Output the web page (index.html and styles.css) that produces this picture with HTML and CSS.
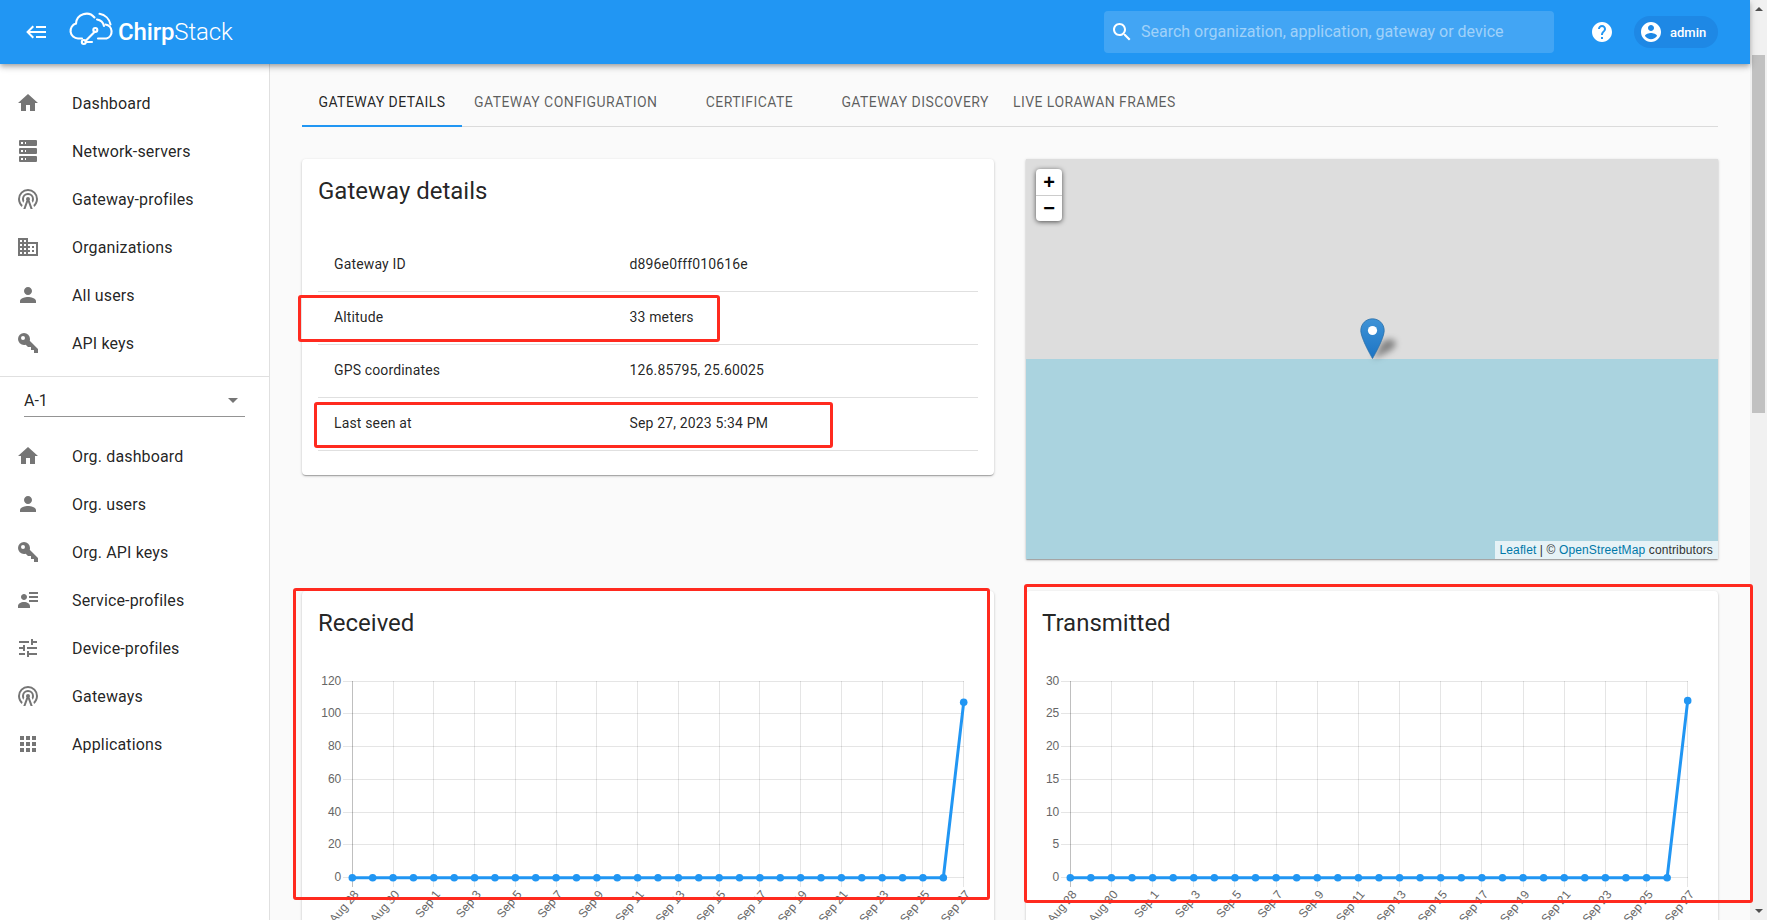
FILE: index.html
```html
<!DOCTYPE html>
<html lang="en">
<head>
<meta charset="utf-8">
<title>ChirpStack - Gateway details</title>
<link rel="stylesheet" href="styles.css">
</head>
<body>
<div class="app">
  <div class="page">
    <header class="topbar">
      <svg class="ic ic-menu" viewBox="0 0 24 24"><path d="M5,13L9,17L7.6,18.42L1.18,12L7.6,5.58L9,7L5,11H21V13H5M21,6V8H11V6H21M21,16V18H11V16H21Z"/></svg>
      <div class="logo">
        <svg class="logo-mark" viewBox="0 0 60 50">
          <path class="logo-line" d="M21 33.5H17A7.6 7.6 0 0 1 15 18.6A10.5 10.5 0 0 1 33.5 12.5"/>
          <path class="logo-line" d="M44.5 19.5A7.2 7.2 0 0 1 45.5 33.5H37"/>
          <path class="logo-line" d="M38.5 8.8A13.5 13.5 0 0 1 49.5 19.5"/>
          <path class="logo-line" d="M36 14.5A8.5 8.5 0 0 1 43 21"/>
          <path class="logo-line" d="M34 26.5L24.5 36"/>
          <circle class="logo-line" cx="34.3" cy="25" r="2"/>
          <circle class="logo-line" cx="22.8" cy="37" r="2"/>
          <path class="logo-line" d="M24.8 37H31"/>
        </svg>
        <span class="logo-text"><b>Chirp</b>Stack</span>
      </div>
      <div class="search">
        <svg class="ic" viewBox="0 0 24 24"><path d="M15.5 14h-.79l-.28-.27C15.41 12.59 16 11.11 16 9.5 16 5.91 13.09 3 9.5 3S3 5.91 3 9.5 5.91 16 9.5 16c1.61 0 3.09-.59 4.23-1.57l.27.28v.79l5 4.99L20.49 19l-4.99-5zm-6 0C7.01 14 5 11.99 5 9.5S7.01 5 9.5 5 14 7.01 14 9.5 11.99 14 9.5 14z"/></svg>
        <span class="search-text">Search organization, application, gateway or device</span>
      </div>
      <svg class="ic ic-help" viewBox="0 0 24 24"><path d="M12 2C6.48 2 2 6.48 2 12s4.48 10 10 10 10-4.48 10-10S17.52 2 12 2zm1 17h-2v-2h2v2zm2.07-7.75l-.9.92C13.45 12.9 13 13.5 13 15h-2v-.5c0-1.1.45-2.1 1.17-2.83l1.24-1.26c.37-.36.59-.86.59-1.41 0-1.1-.9-2-2-2s-2 .9-2 2H8c0-2.21 1.79-4 4-4s4 1.79 4 4c0 .88-.36 1.68-.93 2.25z"/></svg>
      <div class="chip">
        <svg class="ic" viewBox="0 0 24 24"><path d="M12 2C6.48 2 2 6.48 2 12s4.48 10 10 10 10-4.48 10-10S17.52 2 12 2zm0 3c1.66 0 3 1.34 3 3s-1.34 3-3 3-3-1.34-3-3 1.34-3 3-3zm0 14.2c-2.5 0-4.71-1.28-6-3.22.03-1.99 4-3.08 6-3.08 1.99 0 5.97 1.09 6 3.08-1.29 1.94-3.5 3.22-6 3.22z"/></svg>
        <span>admin</span>
      </div>
    </header>

    <div class="body">
      <nav class="sidebar">
        <ul class="nav nav-first">
          <li><svg class="ic" viewBox="0 0 24 24"><path d="M10 20v-6h4v6h5v-8h3L12 3 2 12h3v8z"/></svg>Dashboard</li>
          <li><svg class="ic" viewBox="0 0 24 24"><path d="M4,1H20A1,1 0 0,1 21,2V6A1,1 0 0,1 20,7H4A1,1 0 0,1 3,6V2A1,1 0 0,1 4,1M4,9H20A1,1 0 0,1 21,10V14A1,1 0 0,1 20,15H4A1,1 0 0,1 3,14V10A1,1 0 0,1 4,9M4,17H20A1,1 0 0,1 21,18V22A1,1 0 0,1 20,23H4A1,1 0 0,1 3,22V18A1,1 0 0,1 4,17M9,5H10V3H9V5M9,13H10V11H9V13M9,21H10V19H9V21M5,3V5H7V3H5M5,11V13H7V11H5M5,19V21H7V19H5Z"/></svg>Network-servers</li>
          <li><svg class="ic" viewBox="0 0 24 24"><path d="M12,10A2,2 0 0,1 14,12C14,12.5 13.82,12.94 13.53,13.29L16.7,22H14.57L12,14.93L9.43,22H7.3L10.47,13.29C10.18,12.94 10,12.5 10,12A2,2 0 0,1 12,10M12,8A4,4 0 0,0 8,12C8,12.5 8.1,13 8.28,13.46L7.4,15.86C6.53,14.81 6,13.47 6,12A6,6 0 0,1 12,6A6,6 0 0,1 18,12C18,13.47 17.47,14.81 16.6,15.86L15.72,13.46C15.9,13 16,12.5 16,12A4,4 0 0,0 12,8M12,4A8,8 0 0,0 4,12C4,14.36 5,16.5 6.64,17.94L5.92,19.94C3.54,18.11 2,15.23 2,12A10,10 0 0,1 12,2A10,10 0 0,1 22,12C22,15.23 20.46,18.11 18.08,19.94L17.36,17.94C19,16.5 20,14.36 20,12A8,8 0 0,0 12,4Z"/></svg>Gateway-profiles</li>
          <li><svg class="ic" viewBox="0 0 24 24"><path d="M12 7V3H2v18h20V7H12zM6 19H4v-2h2v2zm0-4H4v-2h2v2zm0-4H4V9h2v2zm0-4H4V5h2v2zm4 12H8v-2h2v2zm0-4H8v-2h2v2zm0-4H8V9h2v2zm0-4H8V5h2v2zm10 12h-8v-2h2v-2h-2v-2h2v-2h-2V9h8v10zm-2-8h-2v2h2v-2zm0 4h-2v2h2v-2z"/></svg>Organizations</li>
          <li><svg class="ic" viewBox="0 0 24 24"><path d="M12 12c2.21 0 4-1.79 4-4s-1.79-4-4-4-4 1.79-4 4 1.79 4 4 4zm0 2c-2.67 0-8 1.34-8 4v2h16v-2c0-2.66-5.33-4-8-4z"/></svg>All users</li>
          <li><svg class="ic" viewBox="0 0 24 24"><path d="M22,18V22H18V19H15V16H12L9.74,13.74C9.19,13.91 8.61,14 8,14A6,6 0 0,1 2,8A6,6 0 0,1 8,2A6,6 0 0,1 14,8C14,8.61 13.91,9.19 13.74,9.74L22,18M7,5A2,2 0 0,0 5,7A2,2 0 0,0 7,9A2,2 0 0,0 9,7A2,2 0 0,0 7,5Z"/></svg>API keys</li>
        </ul>
        <div class="org-select">
          <span>A-1</span>
          <svg class="ic" viewBox="0 0 24 24"><path d="M7 10l5 5 5-5z"/></svg>
        </div>
        <ul class="nav">
          <li><svg class="ic" viewBox="0 0 24 24"><path d="M10 20v-6h4v6h5v-8h3L12 3 2 12h3v8z"/></svg>Org. dashboard</li>
          <li><svg class="ic" viewBox="0 0 24 24"><path d="M12 12c2.21 0 4-1.79 4-4s-1.79-4-4-4-4 1.79-4 4 1.79 4 4 4zm0 2c-2.67 0-8 1.34-8 4v2h16v-2c0-2.66-5.33-4-8-4z"/></svg>Org. users</li>
          <li><svg class="ic" viewBox="0 0 24 24"><path d="M22,18V22H18V19H15V16H12L9.74,13.74C9.19,13.91 8.61,14 8,14A6,6 0 0,1 2,8A6,6 0 0,1 8,2A6,6 0 0,1 14,8C14,8.61 13.91,9.19 13.74,9.74L22,18M7,5A2,2 0 0,0 5,7A2,2 0 0,0 7,9A2,2 0 0,0 9,7A2,2 0 0,0 7,5Z"/></svg>Org. API keys</li>
          <li><svg class="ic" viewBox="0 0 24 24"><path d="M11,9C11,10.66 9.66,12 8,12C6.34,12 5,10.66 5,9C5,7.34 6.34,6 8,6C9.66,6 11,7.34 11,9M14,20H2V18C2,15.79 4.69,14 8,14C11.31,14 14,15.79 14,18M22,12V14H13V12M22,8V10H13V8M22,4V6H13V4Z"/></svg>Service-profiles</li>
          <li><svg class="ic" viewBox="0 0 24 24"><path d="M3 17v2h6v-2H3zM3 5v2h10V5H3zm10 16v-2h8v-2h-8v-2h-2v6h2zM7 9v2H3v2h4v2h2V9H7zm14 4v-2H11v2h10zm-6-4h2V7h4V5h-4V3h-2v6z"/></svg>Device-profiles</li>
          <li><svg class="ic" viewBox="0 0 24 24"><path d="M12,10A2,2 0 0,1 14,12C14,12.5 13.82,12.94 13.53,13.29L16.7,22H14.57L12,14.93L9.43,22H7.3L10.47,13.29C10.18,12.94 10,12.5 10,12A2,2 0 0,1 12,10M12,8A4,4 0 0,0 8,12C8,12.5 8.1,13 8.28,13.46L7.4,15.86C6.53,14.81 6,13.47 6,12A6,6 0 0,1 12,6A6,6 0 0,1 18,12C18,13.47 17.47,14.81 16.6,15.86L15.72,13.46C15.9,13 16,12.5 16,12A4,4 0 0,0 12,8M12,4A8,8 0 0,0 4,12C4,14.36 5,16.5 6.64,17.94L5.92,19.94C3.54,18.11 2,15.23 2,12A10,10 0 0,1 12,2A10,10 0 0,1 22,12C22,15.23 20.46,18.11 18.08,19.94L17.36,17.94C19,16.5 20,14.36 20,12A8,8 0 0,0 12,4Z"/></svg>Gateways</li>
          <li><svg class="ic" viewBox="0 0 24 24"><path d="M16,20H20V16H16M16,14H20V10H16M10,8H14V4H10M16,8H20V4H16M10,14H14V10H10M4,14H8V10H4M4,20H8V16H4M10,20H14V16H10M4,8H8V4H4V8Z"/></svg>Applications</li>
        </ul>
      </nav>

      <main class="main">
        <div class="tabs">
          <div class="tab tab-active">Gateway details</div>
          <div class="tab">Gateway configuration</div>
          <div class="tab">Certificate</div>
          <div class="tab">Gateway discovery</div>
          <div class="tab">Live LoRaWAN frames</div>
        </div>

        <div class="grid">
          <section class="card">
            <h2 class="card-title">Gateway details</h2>
            <div class="details">
              <div class="row"><span>Gateway ID</span><span>d896e0fff010616e</span></div>
              <div class="row"><span>Altitude</span><span>33 meters</span></div>
              <div class="row"><span>GPS coordinates</span><span>126.85795, 25.60025</span></div>
              <div class="row"><span>Last seen at</span><span>Sep 27, 2023 5:34 PM</span></div>
            </div>
          </section>

          <section class="map">
            <div class="zoom-ctl">
              <div class="zoom-btn">+</div>
              <div class="zoom-btn">−</div>
            </div>
            <svg class="pin" viewBox="0 0 50 45">
              <defs>
                <linearGradient id="pinfill" x1="0" y1="0" x2="0" y2="1">
                  <stop offset="0" stop-color="#3f93d6"/>
                  <stop offset="1" stop-color="#1c74c4"/>
                </linearGradient>
                <filter id="pinblur" x="-30%" y="-30%" width="160%" height="160%"><feGaussianBlur stdDeviation="3"/></filter>
              </defs>
              <path class="pin-shadow" d="M13 41L22 24Q30 18 36 24Q36 30 28 34Z" filter="url(#pinblur)"/>
              <path d="M12.5 .8C5.9 .8 .8 6 .8 12.5 .8 20.5 12.5 40.5 12.5 40.5S24.2 20.5 24.2 12.5C24.2 6 19.1 .8 12.5 .8z" fill="url(#pinfill)" stroke="#2a6ea8" stroke-width=".8"/>
              <circle cx="12.5" cy="12.5" r="4.6" fill="#fff"/>
            </svg>
            <div class="attribution"><a>Leaflet</a> | © <a>OpenStreetMap</a> contributors</div>
          </section>

          <section class="card">
            <h2 class="card-title">Received</h2>
            <div class="chart-box"><svg class="chart" data-left="34.3" data-max="120" data-step="20" data-last="107"></svg></div>
          </section>

          <section class="card">
            <h2 class="card-title">Transmitted</h2>
            <div class="chart-box"><svg class="chart" data-left="28.3" data-max="30" data-step="5" data-last="27"></svg></div>
          </section>
        </div>
      </main>
    </div>
  </div>

  <aside class="scrollbar">
    <div class="sb-btn"><i class="tri-up"></i></div>
    <div class="sb-thumb"></div>
    <div class="sb-btn"><i class="tri-down"></i></div>
  </aside>

  <div class="mark mark-altitude"></div>
  <div class="mark mark-seen"></div>
  <div class="mark mark-received"></div>
  <div class="mark mark-transmitted"></div>
</div>
<script src="script.js"></script>
</body>
</html>
```

FILE: styles.css
```css
* { box-sizing: border-box; }
html, body { margin: 0; height: 100%; overflow: hidden; }
body { font-family: Roboto, "Liberation Sans", sans-serif; color: rgba(0,0,0,.87); background: #fafafa; }

.app { position: relative; display: flex; width: 1767px; height: 920px; overflow: hidden; }
.page { flex: 1; min-width: 0; display: flex; flex-direction: column; }

.ic { width: 24px; height: 24px; flex: none; fill: currentColor; display: block; }

/* top bar */
.topbar { position: relative; z-index: 2; flex: none; height: 64px; display: flex; align-items: center; background: #2196f3; color: #fff; box-shadow: 0 2px 4px -1px rgba(0,0,0,.2), 0 4px 5px 0 rgba(0,0,0,.14), 0 1px 10px 0 rgba(0,0,0,.12); }
.ic-menu { margin-left: 25px; }
.logo { display: flex; align-items: center; margin-left: 12px; }
.logo-mark { width: 60px; height: 50px; flex: none; margin-bottom: 4px; }
.logo-line { fill: none; stroke: #fff; stroke-width: 2.1; stroke-linecap: round; }
.logo-text { font-size: 24px; font-weight: 300; margin-left: -3px; letter-spacing: -.15px; }
.logo-text b { font-weight: 500; }
.search { margin-left: auto; width: 450px; height: 42px; display: flex; align-items: center; padding-left: 6px; gap: 7px; border-radius: 4px; background: rgba(255,255,255,.15); }
.search-text { font-size: 16px; padding-bottom: 2px; color: rgba(255,255,255,.5); }
.ic-help { margin-left: 36px; }
.chip { width: 84px; height: 32px; margin: 0 32px 0 20px; display: flex; align-items: center; padding-left: 5px; gap: 7px; border-radius: 16px; background: #1e88e5; font-size: 13px; font-weight: 500; }

/* sidebar */
.body { flex: 1; min-height: 0; display: flex; }
.sidebar { flex: none; width: 270px; background: #fff; border-right: 1px solid rgba(0,0,0,.12); }
.nav { list-style: none; margin: 0; padding: 0; }
.nav-first { padding: 15px 0 9px; border-bottom: 1px solid rgba(0,0,0,.12); }
.nav li { height: 48px; display: flex; align-items: center; gap: 32px; padding-left: 16px; font-size: 16px; letter-spacing: .15px; }
.nav .ic { color: #757575; }
.org-select { display: flex; align-items: center; justify-content: space-between; height: 33px; margin: 7px 24px 15px; border-bottom: 1px solid rgba(0,0,0,.42); font-size: 16px; color: rgba(0,0,0,.87); }
.org-select .ic { color: #757575; }

/* main */
.main { flex: 1; min-width: 0; padding: 14px 32px 0; overflow: hidden; }
.tabs { display: flex; height: 49px; border-bottom: 1px solid rgba(0,0,0,.12); }
.tab { min-width: 160px; height: 48px; padding: 0 12px; display: flex; align-items: center; justify-content: center; font-size: 14px; letter-spacing: .44px; text-transform: uppercase; color: rgba(0,0,0,.64); }
.tab-active { color: rgba(0,0,0,.87); border-bottom: 2px solid #2196f3; height: 49px; padding-top: 1px; }

.grid { display: grid; grid-template-columns: 1fr 1fr; gap: 32px; margin-top: 32px; align-items: start; }
.card { background: #fff; border-radius: 4px; box-shadow: 0 1px 3px 0 rgba(0,0,0,.2), 0 1px 1px 0 rgba(0,0,0,.14), 0 2px 1px -1px rgba(0,0,0,.12); }
.card-title { margin: 0; padding: 16px; font-size: 24px; font-weight: 400; line-height: 32px; }

.details { padding: 16px 16px 24px; }
.row { display: grid; grid-template-columns: 295.5px 1fr; height: 53px; align-items: center; padding: 0 16px 2px; border-bottom: 1px solid rgba(0,0,0,.12); font-size: 14px; letter-spacing: .15px; }

/* map */
.map { position: relative; height: 400px; background: linear-gradient(#ddd 50%, #aad3df 50%); box-shadow: 0 1px 3px 0 rgba(0,0,0,.2), 0 1px 1px 0 rgba(0,0,0,.14), 0 2px 1px -1px rgba(0,0,0,.12); font-family: "Liberation Sans", Arial, sans-serif; }
.zoom-ctl { position: absolute; left: 10px; top: 10px; width: 26px; border-radius: 4px; background: #fff; box-shadow: 0 1px 5px rgba(0,0,0,.65); overflow: hidden; }
.zoom-btn { height: 26px; display: flex; align-items: center; justify-content: center; font: bold 20px/26px "Liberation Sans", Arial, sans-serif; color: #000; }
.zoom-btn + .zoom-btn { border-top: 1px solid #ccc; padding-bottom: 2px; }
.pin { position: absolute; left: 334px; top: 159px; width: 50px; height: 45px; overflow: visible; }
.pin-shadow { fill: rgba(0,0,0,.4); }
.attribution { position: absolute; right: 0; bottom: 0; height: 18px; padding: 0 5px; background: rgba(255,255,255,.7); font-size: 12px; line-height: 18px; letter-spacing: .125px; color: #333; }
.attribution a { color: #0078a8; }

/* charts */
.chart-box { padding: 16px; height: 340px; }
.chart { display: block; width: 660px; height: 320px; overflow: visible; }
.chart .grid-line { stroke: rgba(0,0,0,.1); stroke-width: 1; shape-rendering: crispEdges; }
.chart .axis-line { stroke: rgba(0,0,0,.25); stroke-width: 1; shape-rendering: crispEdges; }
.chart .series { fill: none; stroke: #2196f3; stroke-width: 3; }
.chart .point { fill: #2196f3; }
.chart text { font: 12px "Liberation Sans", Arial, sans-serif; fill: #666; }

/* scrollbar */
.scrollbar { flex: none; width: 17px; display: flex; flex-direction: column; background: #f1f1f1; }
.sb-btn { height: 17px; display: flex; align-items: center; justify-content: center; }
.tri-up { width: 0; height: 0; border: 4px solid transparent; border-top: 0; border-bottom: 4px solid #505050; }
.tri-down { width: 0; height: 0; border: 4px solid transparent; border-bottom: 0; border-top: 4px solid #505050; }
.sb-thumb { height: 358px; margin: 38px 2px 0 2px; background: #c1c1c1; }
.sb-thumb + .sb-btn { margin-top: auto; margin-bottom: 1px; }

/* red annotations drawn over the screenshot */
.mark { position: absolute; z-index: 3; border: 3px solid #ff2a1f; border-radius: 3px; pointer-events: none; }
.mark-altitude { left: 298px; top: 295px; width: 422px; height: 47px; }
.mark-seen { left: 314px; top: 402px; width: 519px; height: 46px; }
.mark-received { left: 293px; top: 588px; width: 697px; height: 312px; }
.mark-transmitted { left: 1024px; top: 584px; width: 729px; height: 319px; }
```

FILE: script.js
```js
var NS = 'http://www.w3.org/2000/svg';
var RIGHT = 645.7, TOP = 10, BOTTOM = 206.7, POINTS = 31;
var LABELS = ['Aug 28','Aug 30','Sep 1','Sep 3','Sep 5','Sep 7','Sep 9','Sep 11','Sep 13','Sep 15','Sep 17','Sep 19','Sep 21','Sep 23','Sep 25','Sep 27'];

function add(svg, name, attrs, text) {
  var el = document.createElementNS(NS, name);
  for (var k in attrs) el.setAttribute(k, attrs[k]);
  if (text) el.textContent = text;
  svg.appendChild(el);
}

document.querySelectorAll('.chart').forEach(function (svg) {
  var left = +svg.dataset.left, max = +svg.dataset.max, step = +svg.dataset.step, last = +svg.dataset.last;
  var dx = (RIGHT - left) / (POINTS - 1);
  var yOf = function (v) { return BOTTOM - (v / max) * (BOTTOM - TOP); };

  for (var v = 0; v <= max; v += step) {
    var y = yOf(v);
    add(svg, 'line', { 'class': 'grid-line', x1: left - 9, x2: RIGHT, y1: y, y2: y });
    add(svg, 'text', { x: left - 11, y: y + 3.5, 'text-anchor': 'end' }, String(v));
  }
  LABELS.forEach(function (label, i) {
    var x = left + i * 2 * dx;
    var lx = x + 7, ly = BOTTOM + 17;
    add(svg, 'line', { 'class': i === 0 ? 'axis-line' : 'grid-line', x1: x, x2: x, y1: TOP, y2: BOTTOM + 9 });
    add(svg, 'text', { x: lx, y: ly, 'text-anchor': 'end', transform: 'rotate(-50 ' + lx + ' ' + ly + ')' }, label);
  });

  var pts = [];
  for (var i = 0; i < POINTS; i++) pts.push([left + i * dx, i === POINTS - 1 ? yOf(last) : BOTTOM]);
  add(svg, 'polyline', { 'class': 'series', points: pts.map(function (p) { return p.join(','); }).join(' ') });
  pts.forEach(function (p) { add(svg, 'circle', { 'class': 'point', cx: p[0], cy: p[1], r: 3.8 }); });
});
```
